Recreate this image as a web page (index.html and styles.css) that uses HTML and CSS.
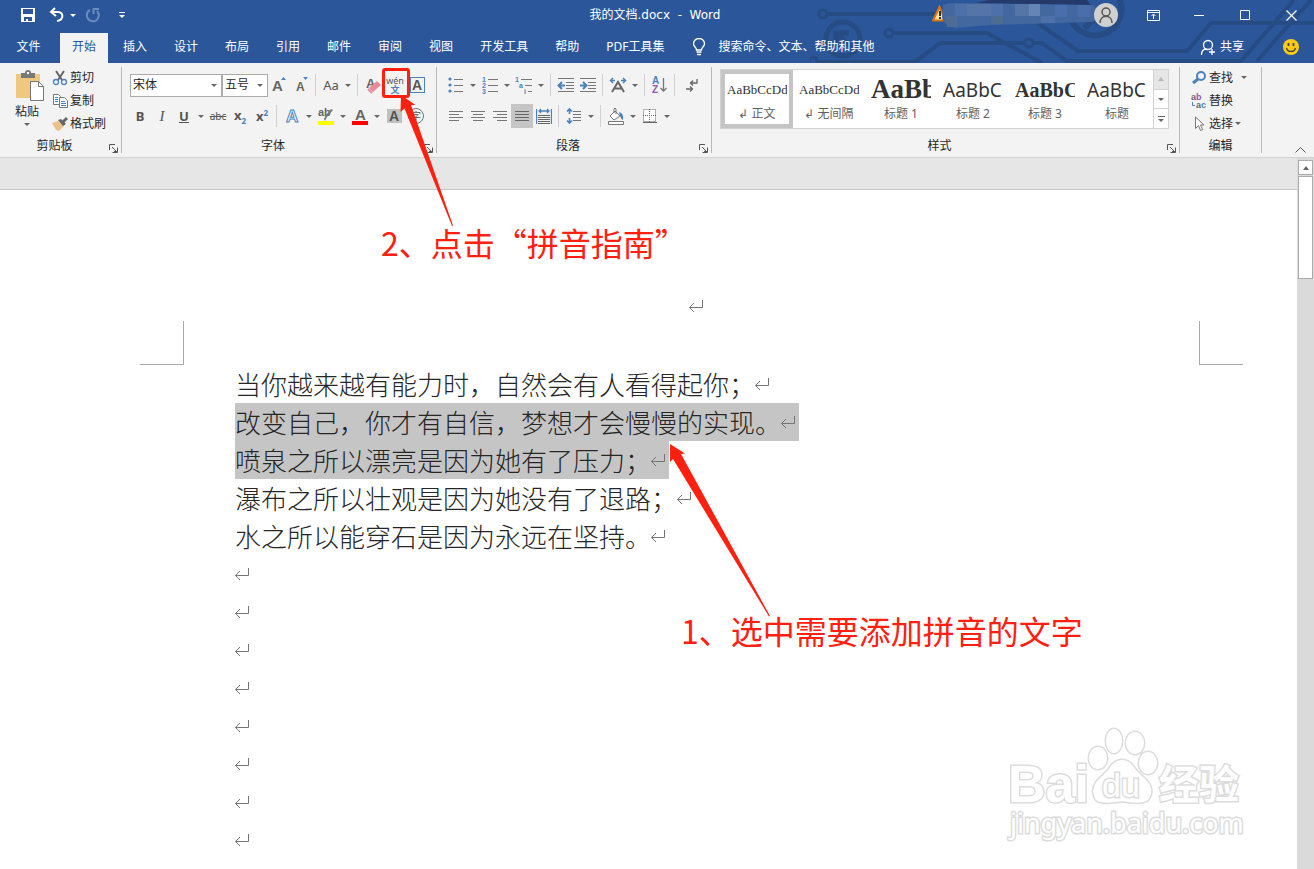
FILE: index.html
```html
<!DOCTYPE html>
<html lang="zh-CN">
<head>
    <meta charset="UTF-8">
    <meta name="viewport" content="width=device-width, initial-scale=1.0">
    <title>我的文档.docx - Word</title>
    <link rel="stylesheet" href="styles.css">
</head>
<body>
    <!-- shared shapes -->
    <svg class="defs" width="0" height="0">
        <symbol id="mark" viewBox="0 0 16 14"><path d="M14.500 1v7.500H1.500M6 4L1.500 8.500L6 13" fill="none" stroke="#757575"/></symbol>
        <symbol id="launch" viewBox="0 0 9 9"><path d="M.5 6V.5H6M3 3l4 4M8.500 3.500v5h-5M5 7.500h3" fill="none" stroke="#555"/></symbol>
    </svg>

    <div class="app">
        <header class="header">
            <svg class="circuit" width="504" height="63" viewBox="810 0 504 63" fill="none" stroke="#274b83" stroke-width="4">
                <circle cx="823" cy="14" r="4" stroke-width="3"/>
                <path d="M827 14H1000"/>
                <circle cx="843" cy="39" r="17" stroke-width="5"/>
                <path d="M836 47V33h13M838 35l14 13" stroke-width="5"/>
                <circle cx="889" cy="33" r="4" stroke-width="3"/>
                <path d="M893 33H987L1042 63"/>
                <circle cx="813" cy="61" r="4" stroke-width="3"/>
                <path d="M817 62H915L940 43H1024"/>
                <circle cx="1029" cy="43" r="4" stroke-width="3"/>
                <path d="M1034 43h8L1067 61H1241L1294 0"/>
                <path d="M1036 22L1078 51H1187L1211 23H1314"/>
                <path d="M1257 61L1311 0"/>
                <path d="M1071 20A26 26 0 1 0 1119 -2M1084 28l10-9" stroke-width="6"/>
            </svg>

            <div class="titlebar">
                <div class="quick">
                    <button title="保存"><svg width="16" height="16" viewBox="0 0 16 16"><path d="M1 1h14v14H1z" fill="#fff"/><path d="M3 2h10v5H3zM4 10h8v4H4z" fill="#2b579a"/><path d="M6 12h2v2H6z" fill="#fff"/></svg></button>
                    <button title="撤消"><svg width="16" height="16" viewBox="0 0 16 16" fill="none" stroke="#fff" stroke-width="2"><path d="M6 1L2 5l5 4M2 5h7c6 0 6 8-1 9"/></svg></button>
                    <button class="arrow" title="更多撤消"></button>
                    <button title="重复"><svg width="16" height="16" viewBox="0 0 16 16" fill="none" stroke="#6d8cbb" stroke-width="2"><path d="M5 3a6 6 0 1 0 7 1M8.500 7V2H14"/></svg></button>
                    <button class="custom" title="自定义快速访问工具栏"></button>
                </div>
                <div class="title">我的文档.docx&nbsp; -&nbsp; Word</div>
                <div class="account">
                    <svg width="166" height="30" viewBox="931 0 166 30">
                        <path d="M932 20.500L938.500 7l6 13.500z" fill="#ffe3a0" stroke="#d9720f" stroke-width="2"/>
                        <path d="M939 11v5M939 17v2" stroke="#333" stroke-width="2"/>
                        <path d="M976 3L988 0h98l4 5z" fill="#25396b"/>
                        <path d="M942 5q4-2 10-2l140 2q5 4 5 12-2 5-8 5l-100 3-34 3q-12-2-14-10z" fill="#43679f"/>
                        <path d="M954 4h12v12h-12zM990 4h12v12h-12zM1040 16h14v7h-14z" fill="#4d70aa"/>
                        <path d="M966 4h24v12h-24zM1014 4h14v12h-14z" fill="#5575a6"/>
                        <path d="M1028 4h11v12h-11z" fill="#6585b7"/>
                        <path d="M944 16h12v11h-10zM990 16h12v8h-12z" fill="#4e6c93"/>
                        <path d="M1054 5h12v12h-12zM1077 5h12v12h-12z" fill="#4a6eab"/>
                    </svg>
                    <button class="avatar" title="帐户"><svg width="24" height="24" viewBox="0 0 24 24"><circle cx="12" cy="12" r="12" fill="#d0d0d0"/><g fill="none" stroke="#555" stroke-width="1.500"><circle cx="12" cy="9" r="4"/><path d="M6 20c0-9 12-9 12 0"/></g></svg></button>
                    <button class="win" title="功能区显示选项"><svg width="13" height="11" viewBox="0 0 13 11" fill="none" stroke="#fff"><path d="M.5.5h12v10H.5zM.5 2.500h12M6.500 9V4.500M4.500 6l2-2 2 2"/></svg></button>
                    <button class="win" title="最小化"><svg width="10" height="11" viewBox="0 0 10 11" stroke="#fff"><path d="M0 5.500h10"/></svg></button>
                    <button class="win" title="最大化"><svg width="10" height="10" viewBox="0 0 10 10" fill="none" stroke="#fff"><path d="M.5.5h9v9h-9z"/></svg></button>
                    <button class="win" title="关闭"><svg width="11" height="11" viewBox="0 0 11 11" stroke="#fff" stroke-width="1.200"><path d="M.5.5l10 10M10.500.5l-10 10"/></svg></button>
                </div>
            </div>

            <nav class="tabs">
                <button class="file">文件</button>
                <button class="active">开始</button>
                <button>插入</button>
                <button>设计</button>
                <button>布局</button>
                <button>引用</button>
                <button>邮件</button>
                <button>审阅</button>
                <button>视图</button>
                <button>开发工具</button>
                <button>帮助</button>
                <button>PDF工具集</button>
                <label class="tell">
                    <svg width="14" height="18" viewBox="0 0 14 18" fill="none" stroke="#fff" stroke-width="1.300"><path d="M4.500 12c0-3-3-3-3-6.500a5.500 5 0 0 1 11 0c0 3.500-3 3.500-3 6.500zM4.500 14h5M5 16.500h4"/></svg>
                    <input type="text" placeholder="搜索命令、文本、帮助和其他">
                </label>
                <button class="share"><svg width="16" height="17" viewBox="0 0 16 17" fill="none" stroke="#fff" stroke-width="1.300"><circle cx="8" cy="6" r="4.500"/><path d="M1.500 16c0-4 2-6 5-6M9 13h6M12 10v6"/></svg>共享</button>
                <button class="smile" title="反馈"><svg width="16" height="16" viewBox="0 0 16 16"><circle cx="8" cy="8" r="8" fill="#fc1"/><path d="M5.500 4v3M10.500 4v3" stroke="#444" stroke-width="1.800"/><path d="M3.500 9c1 4.500 8 4.500 9 0" fill="none" stroke="#444" stroke-width="1.300"/></svg></button>
            </nav>
        </header>

        <div class="ribbon">
            <section class="group clipboard">
                <div class="tools">
                    <button class="paste">
                        <svg width="28" height="31" viewBox="0 0 28 31"><path d="M0 4h24v24H0z" fill="#edc87e"/><path d="M5 3h4q0-3 3-3t3 3h4v5H5z" fill="#777"/><circle cx="12" cy="3" r="1.200" fill="#fff"/><path d="M14.500 11.500h8l5 5v14h-13z" fill="#fff" stroke="#777"/><path d="M22.500 11.500v5h5" fill="none" stroke="#777"/></svg>
                        <span>粘贴</span>
                        <i class="tri"></i>
                    </button>
                    <div class="list">
                        <button><svg width="16" height="16" viewBox="0 0 16 16" fill="none"><path d="M4 1l6 9M12 1L6 10" stroke="#666" stroke-width="2"/><circle cx="4" cy="12" r="2.500" stroke="#4a82bd" stroke-width="1.300"/><circle cx="12" cy="12" r="2.500" stroke="#4a82bd" stroke-width="1.300"/></svg>剪切</button>
                        <button><svg width="16" height="16" viewBox="0 0 16 16" fill="#fff" stroke="#777"><path d="M1.500 1.500h5l2 2v8h-7z"/><path d="M3 4.500h3M3 6.500h3M3 8.500h3" stroke="#4a82bd"/><path d="M7.500 4.500h5l3 3v7h-8z"/><path d="M9 8.500h4M9 10.500h5M9 12.500h5" stroke="#4a82bd"/></svg>复制</button>
                        <button><svg width="16" height="16" viewBox="0 0 16 16"><path d="M0 7l6-2 6 5-5 5-3-1z" fill="#edc28a"/><path d="M6 4l3-1 5 5-3 2z" fill="#666"/><path d="M11 6l4-4" stroke="#666" stroke-width="3"/></svg>格式刷</button>
                    </div>
                </div>
                <footer><span>剪贴板</span><button title="剪贴板"><svg width="9" height="9"><use href="#launch"/></svg></button></footer>
            </section>

            <section class="group font">
                <div class="tools rows">
                    <div class="row">
                        <label class="combo name"><select aria-label="字体"><option>宋体</option></select></label>
                        <label class="combo size"><select aria-label="字号"><option>五号</option></select></label>
                        <button title="增大字号"><svg width="18" height="18" viewBox="0 0 18 18"><text x="2" y="15" class="g" font-size="15">A</text><path d="M11 4l2.500-3L16 4z" fill="#4a82bd"/></svg></button>
                        <button title="减小字号"><svg width="18" height="18" viewBox="0 0 18 18"><text x="4" y="15" class="g" font-size="12">A</text><path d="M11 1h5l-2.500 3z" fill="#4a82bd"/></svg></button>
                        <i class="sep"></i>
                        <button class="case">Aa</button><button class="arrow"></button>
                        <i class="sep"></i>
                        <button title="清除格式"><svg width="18" height="18" viewBox="0 0 18 18"><text x="2" y="12" class="g" font-size="13">A</text><path d="M5 12l8-7 4 4-8 7z" fill="#e8899b"/><path d="M4 13l4 4" stroke="#e8899b" stroke-width="2"/></svg></button>
                        <button title="拼音指南" class="pinyin"><span>wén</span><b>文</b></button>
                        <button title="字符边框"><span class="boxed">A</span></button>
                    </div>
                    <div class="row">
                        <button class="glyph"><b>B</b></button>
                        <button class="glyph serif"><i>I</i></button>
                        <button class="glyph"><b><u>U</u></b></button><button class="arrow"></button>
                        <button class="strike"><s>abc</s></button>
                        <button class="glyph"><b>x<sub>2</sub></b></button>
                        <button class="glyph"><b>x<sup>2</sup></b></button>
                        <i class="sep"></i>
                        <button title="文本效果"><svg width="18" height="20" viewBox="0 0 18 20"><text x="3" y="16" font-family="Liberation Sans" font-weight="bold" font-size="17" fill="#fff" stroke="#4a82bd">A</text></svg></button><button class="arrow"></button>
                        <button title="突出显示"><svg width="18" height="18" viewBox="0 0 18 18"><text x="1" y="9" class="g" font-size="11">ab</text><path d="M16 3l-6 7-2 4-1-2 2-4 5-6z" fill="#777"/><path d="M1 14h16v4H1z" fill="#ff0"/></svg></button><button class="arrow"></button>
                        <button title="字体颜色"><svg width="18" height="18" viewBox="0 0 18 18"><text x="4" y="13" class="g" font-size="15">A</text><path d="M1 14h16v4H1z" fill="#f00"/></svg></button><button class="arrow"></button>
                        <button title="字符底纹"><span class="shade">A</span></button>
                        <button title="带圈字符"><span class="ring">字</span></button>
                    </div>
                </div>
                <footer><span>字体</span><button title="字体设置"><svg width="9" height="9"><use href="#launch"/></svg></button></footer>
            </section>

            <section class="group para">
                <div class="tools rows">
                    <div class="row">
                        <button title="项目符号"><svg width="16" height="18" viewBox="0 0 16 18"><g fill="#4a82bd"><circle cx="2" cy="3" r="1.600"/><circle cx="2" cy="9" r="1.600"/><circle cx="2" cy="15" r="1.600"/></g><path d="M6 3.500h9M6 9.500h9M6 15.500h9" stroke="#777"/></svg></button><button class="arrow"></button>
                        <button title="编号"><svg width="16" height="18" viewBox="0 0 16 18"><g class="n"><text x="0" y="6">1</text><text x="0" y="12">2</text><text x="0" y="18">3</text></g><path d="M6 3.500h10M6 9.500h10M6 15.500h10" stroke="#777"/></svg></button><button class="arrow"></button>
                        <button title="多级列表"><svg width="18" height="18" viewBox="0 0 18 18"><g class="n"><text x="0" y="6">1</text><text x="4" y="12">a</text><text x="9" y="18">i</text></g><path d="M6 3.500h11M10 9.500h7M13 15.500h4" stroke="#777"/></svg></button><button class="arrow"></button>
                        <i class="sep"></i>
                        <button title="减少缩进"><svg width="18" height="18" viewBox="0 0 18 18"><path d="M1 2.500h16M9 6.500h8M9 9.500h8M9 12.500h8M1 15.500h16" stroke="#777"/><path d="M8 9.500H2M5 6L1.500 9.500 5 13" fill="none" stroke="#4a82bd" stroke-width="2"/></svg></button>
                        <button title="增加缩进"><svg width="18" height="18" viewBox="0 0 18 18"><path d="M1 2.500h16M9 6.500h8M9 9.500h8M9 12.500h8M1 15.500h16" stroke="#777"/><path d="M1 9.500h6M4 6l3.500 3.500L4 13" fill="none" stroke="#4a82bd" stroke-width="2"/></svg></button>
                        <i class="sep"></i>
                        <button title="中文版式"><svg width="18" height="18" viewBox="0 0 18 18" fill="none"><path d="M3 16l6-10 6 10M5.500 12.500h7" stroke="#666" stroke-width="2"/><path d="M6 4.500H2M4 2L1.500 4.500 4 7M12 4.500h4M14 2l2.500 2.500L14 7" stroke="#4a82bd" stroke-width="1.500"/></svg></button><button class="arrow"></button>
                        <i class="sep"></i>
                        <button title="排序"><svg width="16" height="18" viewBox="0 0 16 18"><text x="0" y="8" font-family="Liberation Sans" font-weight="bold" font-size="10" fill="#4a82bd">A</text><text x="0" y="17" font-family="Liberation Sans" font-weight="bold" font-size="10" fill="#9354b5">Z</text><path d="M11.500 2v13M8.500 12l3 3 3-3" fill="none" stroke="#777" stroke-width="1.300"/></svg></button>
                        <i class="sep"></i>
                        <button title="显示编辑标记"><svg width="16" height="18" viewBox="0 0 16 18" fill="none" stroke="#666" stroke-width="1.300"><path d="M15 3v4H9M11 4.500L8.500 7 11 9.500M4 13h6M8 10.500l2.500 2.500L8 15.500"/></svg></button>
                    </div>
                    <div class="row">
                        <button title="左对齐"><svg width="14" height="14" viewBox="0 0 14 14"><path d="M0 2.500h14M0 5.500h10M0 8.500h14M0 11.500h10" stroke="#777"/></svg></button>
                        <button title="居中"><svg width="14" height="14" viewBox="0 0 14 14"><path d="M0 2.500h14M2 5.500h10M0 8.500h14M2 11.500h10" stroke="#777"/></svg></button>
                        <button title="右对齐"><svg width="14" height="14" viewBox="0 0 14 14"><path d="M0 2.500h14M4 5.500h10M0 8.500h14M4 11.500h10" stroke="#777"/></svg></button>
                        <button title="两端对齐" class="on"><svg width="14" height="14" viewBox="0 0 14 14"><path d="M0 2.500h14M0 5.500h14M0 8.500h14M0 11.500h14" stroke="#666"/></svg></button>
                        <button title="分散对齐"><svg width="16" height="16" viewBox="0 0 16 16" fill="none"><path d="M.5 1v15M15.500 1v15M3 3h10M5 1L3 3l2 2M11 1l2 2-2 2" stroke="#4a82bd" stroke-width="1.300"/><path d="M2 7.500h12M2 9.500h12M2 11.500h12M2 13.500h12M2 15.500h12" stroke="#666"/></svg></button>
                        <i class="sep"></i>
                        <button title="行距"><svg width="16" height="18" viewBox="0 0 16 18" fill="none"><path d="M3.500 2v5M1 4.500L3.500 2 6 4.500M3.500 16v-5M1 13.500L3.500 16 6 13.500" stroke="#4a82bd" stroke-width="1.600"/><path d="M7 4.500h8M7 7.500h8M7 10.500h8M7 13.500h8" stroke="#777"/></svg></button><button class="arrow"></button>
                        <i class="sep"></i>
                        <button title="底纹"><svg width="18" height="18" viewBox="0 0 18 18"><path d="M8 4l5 5-6 4-4-4zM7 6V2q1-2 2 0v5" fill="#fff" stroke="#777"/><path d="M12 5q5 1 4 8-2-1-3-4z" fill="#4a82bd"/><path d="M1.500 14.500h15v3h-15z" fill="#fff" stroke="#777"/></svg></button><button class="arrow"></button>
                        <button title="边框"><svg width="14" height="14" viewBox="0 0 14 14" fill="none" stroke="#666"><path d="M.5.5h12v12H.5zM6.500 0v13M0 6.500h13" fill="#fff" stroke-dasharray="1 1"/><path d="M0 13.500h14"/></svg></button><button class="arrow"></button>
                    </div>
                </div>
                <footer><span>段落</span><button title="段落设置"><svg width="9" height="9"><use href="#launch"/></svg></button></footer>
            </section>

            <section class="group styles">
                <div class="tools">
                    <div class="gallery">
                        <button class="style picked"><span class="sample song">AaBbCcDd</span><span>↲ 正文</span></button>
                        <button class="style"><span class="sample song">AaBbCcDd</span><span>↲ 无间隔</span></button>
                        <button class="style"><span class="sample h1">AaBb</span><span>标题 1</span></button>
                        <button class="style"><span class="sample h2">AaBbC</span><span>标题 2</span></button>
                        <button class="style"><span class="sample h3">AaBbC</span><span>标题 3</span></button>
                        <button class="style"><span class="sample h2">AaBbC</span><span>标题</span></button>
                        <div class="pager">
                            <button class="off" title="上一行"><i class="tri up"></i></button>
                            <button title="下一行"><i class="tri"></i></button>
                            <button class="more" title="其他"><i class="tri"></i></button>
                        </div>
                    </div>
                </div>
                <footer><span>样式</span><button title="样式窗格"><svg width="9" height="9"><use href="#launch"/></svg></button></footer>
            </section>

            <section class="group edit">
                <div class="tools">
                    <div class="list">
                        <button><svg width="16" height="16" viewBox="0 0 16 16" fill="none" stroke="#4a82bd"><circle cx="10" cy="6" r="4" stroke-width="2"/><path d="M7 9l-5 4" stroke-width="3"/></svg>查找<i class="tri far"></i></button>
                        <button><svg width="16" height="16" viewBox="0 0 16 16" font-family="Liberation Sans" font-weight="bold" font-size="9"><text x="0" y="7" fill="#666">a<tspan fill="#9354b5">b</tspan></text><text x="5" y="15" fill="#666">a<tspan fill="#4a82bd">c</tspan></text><path d="M1.500 9v3.500H4" fill="none" stroke="#4a82bd"/></svg>替换</button>
                        <button><svg width="16" height="16" viewBox="0 0 16 16"><path d="M4.500 1v11.500l3-3 2 5 2-1-2-4.500H13z" fill="#fff" stroke="#777"/></svg>选择<i class="tri"></i></button>
                    </div>
                </div>
                <footer><span>编辑</span></footer>
            </section>
            <button class="collapse" title="折叠功能区"><svg width="11" height="6" viewBox="0 0 11 6"><path d="M.5 5.500l5-5 5 5" fill="none" stroke="#555"/></svg></button>
        </div>

        <main class="workspace">
            <div class="canvas">
                <div class="page">
                    <div class="head"><svg class="mark"><use href="#mark"/></svg></div>
                    <div class="corners"><i class="left"></i><i class="right"></i></div>
                    <div class="text">
                        <p>当你越来越有能力时，自然会有人看得起你；<svg class="mark"><use href="#mark"/></svg></p>
                        <p><span class="sel">改变自己，你才有自信，梦想才会慢慢的实现。<svg class="mark"><use href="#mark"/></svg></span></p>
                        <p><span class="sel">喷泉之所以漂亮是因为她有了压力；<svg class="mark"><use href="#mark"/></svg></span></p>
                        <p>瀑布之所以壮观是因为她没有了退路；<svg class="mark"><use href="#mark"/></svg></p>
                        <p>水之所以能穿石是因为永远在坚持。<svg class="mark"><use href="#mark"/></svg></p>
                        <p><svg class="mark"><use href="#mark"/></svg></p>
                        <p><svg class="mark"><use href="#mark"/></svg></p>
                        <p><svg class="mark"><use href="#mark"/></svg></p>
                        <p><svg class="mark"><use href="#mark"/></svg></p>
                        <p><svg class="mark"><use href="#mark"/></svg></p>
                        <p><svg class="mark"><use href="#mark"/></svg></p>
                        <p><svg class="mark"><use href="#mark"/></svg></p>
                        <p><svg class="mark"><use href="#mark"/></svg></p>
                    </div>
                </div>
            </div>
            <div class="scrollbar">
                <button title="向上"><i class="tri up"></i></button>
                <div class="thumb"></div>
            </div>
        </main>

        <!-- notes drawn over the window -->
        <div class="frame"></div>
        <svg class="pointer one" width="56" height="132" viewBox="399 95 56 132"><path d="M401 95L415.500 105H411L453 225.500 452 226 404.500 108.500 400.500 112z" fill="#ff2010"/></svg>
        <svg class="pointer two" width="102" height="174" viewBox="669 443 102 174"><path d="M670 444L685 453.500 681 454 770 616 769 616.500 673 459 670 462z" fill="#ff2010"/></svg>
        <div class="note first">2、点击“拼音指南”</div>
        <div class="note second">1、选中需要添加拼音的文字</div>

        <svg class="watermark" width="240" height="116" viewBox="1006 726 240 116">
            <g fill="#fff" stroke="#dcdcdc" stroke-width="3" paint-order="stroke">
                <text x="1008" y="802" font-family="Liberation Sans" font-weight="bold" font-size="52">Bai</text>
                <ellipse cx="1098" cy="758" rx="9" ry="11"/>
                <ellipse cx="1114" cy="741" rx="8" ry="12"/>
                <ellipse cx="1135" cy="743" rx="9" ry="11"/>
                <ellipse cx="1148" cy="763" rx="9" ry="11"/>
                <path d="M1122 760q8 0 13 9l12 12q8 10 1 19-7 5-26 1-20 4-26-1-6-9 1-19l12-12q5-9 13-9z"/>
                <text x="1102" y="797" font-family="Liberation Sans" font-size="34">du</text>
                <text x="1159" y="799" font-family="Noto Sans CJK SC" font-weight="bold" font-size="40">经验</text>
                <text x="1010" y="833" font-family="Noto Sans" font-size="27">jingyan.baidu.com</text>
            </g>
        </svg>
    </div>
</body>
</html>
```

FILE: styles.css
```css
* {
    box-sizing: border-box;
}

body {
    margin: 0;
    font-family: "Noto Sans", "Noto Sans CJK SC", sans-serif;
    font-size: 12px;
    line-height: 16px;
    color: #262626;
}

button {
    display: flex;
    align-items: center;
    justify-content: center;
    padding: 0;
    border: none;
    background: none;
    color: inherit;
    font: inherit;
    white-space: nowrap;
}

svg {
    flex: none;
}

.defs {
    position: absolute;
}

.app {
    position: relative;
    display: flex;
    flex-direction: column;
    height: 100vh;
    overflow: hidden;
}

/* title bar and tabs */
.header {
    position: relative;
    background-color: #2b579a;
    color: #fff;
}

.circuit {
    position: absolute;
    top: 0;
    right: 0;
}

.titlebar {
    position: relative;
    display: grid;
    grid-template-columns: 1fr auto 1fr;
    align-items: center;
    height: 30px;
}

.quick {
    display: flex;
    align-items: center;
    padding-left: 20px;
    gap: 4px;
}

.quick button {
    width: 16px;
    height: 24px;
    margin-right: 9px;
}

.quick button.arrow {
    width: 8px;
    margin: 0 4px 0 -9px;
}

.arrow::after,
.custom::after,
.combo::after,
.tri {
    content: "";
    border: 3px solid transparent;
    border-top-color: #666;
    border-bottom: none;
}

.quick .arrow::after,
.custom::after {
    border-top-color: #fff;
}

.quick .custom {
    flex-direction: column;
    gap: 2px;
}

.custom::before {
    content: "";
    width: 6px;
    height: 1px;
    background-color: #fff;
}

.title {
    padding-right: 4px;
    font-family: "DejaVu Sans", "Noto Sans CJK SC", sans-serif;
}

.account {
    display: flex;
    align-items: center;
    justify-content: flex-end;
}

.avatar {
    margin: 0 12px 0 -4px;
}

.win {
    width: 46px;
    height: 30px;
}

.tabs {
    position: relative;
    display: flex;
    gap: 3px;
    height: 33px;
    padding-top: 3px;
}

.tabs button {
    padding: 0 12px 2px;
}

.tabs .file {
    width: 57px;
}

.tabs .active {
    background-color: #f3f3f3;
    color: #2b579a;
}

.tell {
    display: flex;
    flex: 1;
    align-items: center;
    gap: 12px;
    padding: 0 0 2px 13px;
}

.tell input {
    width: 200px;
    padding: 0;
    border: none;
    background: none;
    color: #fff;
    font: inherit;
}

.tell input::placeholder {
    color: #fff;
}

.tabs .share {
    gap: 4px;
}

.tabs .smile {
    padding: 0 15px 2px 24px;
}

/* ribbon */
.ribbon {
    display: flex;
    flex: none;
    height: 95px;
    padding: 4px 0;
    border-bottom: 1px solid #d2d2d2;
    background-color: #f3f3f3;
}

.group {
    display: flex;
    flex-direction: column;
    border-right: 1px solid #b8b8b8;
}

.group footer {
    display: flex;
    align-items: center;
    height: 14px;
}

.group footer span {
    flex: 1;
    text-align: center;
}

.group footer button {
    align-self: flex-end;
    margin-right: 3px;
}

.tools {
    display: flex;
    flex: 1;
}

.clipboard {
    width: 122px;
}

.font {
    width: 315px;
}

.para {
    width: 275px;
}

.styles {
    width: 468px;
}

.font .tools {
    padding-left: 7px;
}

.para .tools,
.styles .tools {
    padding-left: 8px;
}

.edit {
    width: 82px;
}

.paste {
    flex-direction: column;
    justify-content: flex-start;
    gap: 3px;
    width: 36px;
    margin-left: 9px;
    padding-top: 3px;
}

.paste svg {
    margin-left: 6px;
}

.list {
    display: flex;
    flex-direction: column;
    padding-left: 7px;
}

.list button {
    justify-content: flex-start;
    gap: 2px;
    height: 23px;
    padding-bottom: 2px;
}

.edit .list {
    padding-left: 11px;
}

.list .far {
    margin-left: 6px;
}

.rows {
    flex-direction: column;
    gap: 7px;
    padding-top: 6px;
}

.row {
    display: flex;
    align-items: center;
    height: 24px;
}

.row button {
    width: 22px;
    height: 24px;
    color: #555;
}

.row .arrow {
    width: 12px;
}

.row .on {
    background-color: #c5c5c5;
}

.sep {
    width: 1px;
    height: 22px;
    margin: 0 4px 0 3px;
    background-color: #d0d0d0;
}

.combo {
    display: flex;
    align-items: center;
    height: 23px;
    padding: 0 4px 0 2px;
    border: 1px solid #ababab;
    background-color: #fff;
}

.combo select {
    flex: 1;
    min-width: 0;
    padding: 0;
    border: none;
    background: none;
    color: #262626;
    font: inherit;
    appearance: none;
}

.name {
    width: 92px;
    margin-left: 1px;
}

.size {
    width: 46px;
}

.g {
    font-family: "Liberation Sans", sans-serif;
    font-weight: bold;
    fill: #666;
}

.n {
    font-family: "Liberation Sans", sans-serif;
    font-size: 7px;
    font-weight: bold;
    fill: #4a82bd;
}

.case {
    font-size: 13px;
}

.row .pinyin {
    flex-direction: column;
    font-size: 9px;
    line-height: 9px;
}

.pinyin b {
    color: #4a82bd;
}

.boxed,
.shade {
    width: 15px;
    font: bold 14px/14px "Liberation Sans", sans-serif;
}

.boxed {
    border: 1px solid #4a82bd;
}

.shade {
    background-color: #c0c0c0;
}

.ring {
    width: 16px;
    border: 1px solid #777;
    border-radius: 50%;
    font-size: 10px;
    line-height: 14px;
}

.glyph {
    font-family: "Noto Sans", sans-serif;
    font-size: 13px;
}

.glyph.serif {
    font-family: "Liberation Serif", serif;
    font-size: 15px;
}

.glyph sub,
.glyph sup {
    color: #4a82bd;
    font-size: 8px;
    line-height: 8px;
}

.strike {
    font-size: 10px;
}

/* style gallery */
.gallery {
    display: flex;
    height: 60px;
    margin-top: 2px;
    border: 1px solid #d2d2d2;
    background-color: #fff;
}

.style {
    flex-direction: column;
    gap: 2px;
    width: 72px;
    padding: 0 4px;
    border: 4px solid transparent;
    color: #606060;
}

.picked {
    border-color: #c5c5c5;
}

.sample {
    width: 60px;
    height: 28px;
    overflow: hidden;
    color: #333;
    line-height: 28px;
    text-align: left;
}

.song {
    font-family: "Liberation Serif", serif;
    font-size: 13px;
}

.h1 {
    font: bold 27px/26px "Liberation Serif", serif;
}

.h2 {
    font-size: 19px;
}

.h3 {
    font: bold 20px/28px "Liberation Serif", serif;
}

.pager {
    display: flex;
    flex-direction: column;
    width: 15px;
    border-left: 1px solid #d2d2d2;
}

.pager button {
    flex: 1;
    border-bottom: 1px solid #d2d2d2;
}

.pager button:last-child {
    border-bottom: none;
}

.pager .off {
    background-color: #e6e6e6;
}

.pager .more {
    flex-direction: column;
    gap: 2px;
}

.more::before {
    content: "";
    width: 7px;
    height: 1px;
    background-color: #666;
}

.up {
    border-top: none;
    border-bottom: 4px solid #666;
}

.off .up {
    border-bottom-color: #b8b8b8;
}

.collapse {
    align-self: flex-end;
    margin-left: auto;
    padding-right: 8px;
}

/* document */
.workspace {
    display: flex;
    flex: 1;
    min-height: 0;
    background-color: #e6e6e6;
}

.canvas {
    flex: 1;
    padding-top: 31px;
    overflow: hidden;
}

.page {
    height: 100%;
    border-top: 1px solid #c6c6c6;
    background-color: #fff;
}

.head {
    display: flex;
    justify-content: center;
    height: 131px;
    padding: 109px 86px 0 184px;
}

.corners {
    display: flex;
    justify-content: space-between;
    padding: 0 54px 0 140px;
}

.corners i {
    width: 44px;
    height: 44px;
    border-bottom: 1px solid #a8a8a8;
}

.corners .left {
    border-right: 1px solid #a8a8a8;
}

.corners .right {
    border-left: 1px solid #a8a8a8;
}

.text {
    padding-left: 235px;
    color: #262626;
    font-family: "Noto Sans CJK SC", sans-serif;
    font-size: 26px;
    font-weight: 300;
    line-height: 38px;
}

.text p {
    display: flex;
    align-items: center;
    height: 38px;
    margin: 0;
}

.sel {
    display: flex;
    align-items: center;
    background-color: #c5c5c5;
}

.mark {
    width: 16px;
    height: 14px;
    margin: 0 3px 0 -1px;
}

.scrollbar {
    display: flex;
    flex-direction: column;
    gap: 1px;
    width: 17px;
    padding: 2px 1px 0;
    background-color: #dadada;
}

.scrollbar button {
    height: 15px;
    border: 1px solid #ababab;
    background-color: #fff;
}

.thumb {
    height: 103px;
    border: 1px solid #ababab;
    background-color: #fff;
}

/* notes */
.frame,
.pointer,
.note,
.watermark {
    position: absolute;
}

.frame {
    top: 68px;
    left: 382px;
    width: 28px;
    height: 30px;
    border: 3px solid #ff2010;
    border-radius: 3px;
}

.one {
    top: 95px;
    left: 399px;
}

.two {
    top: 443px;
    left: 669px;
}

.note {
    color: #ff2010;
    font-family: "Noto Sans CJK SC", sans-serif;
    font-size: 32px;
    line-height: 40px;
    white-space: nowrap;
}

.first {
    top: 222px;
    left: 381px;
}

.second {
    top: 610px;
    left: 681px;
}

.watermark {
    right: 68px;
    bottom: 27px;
}
```
